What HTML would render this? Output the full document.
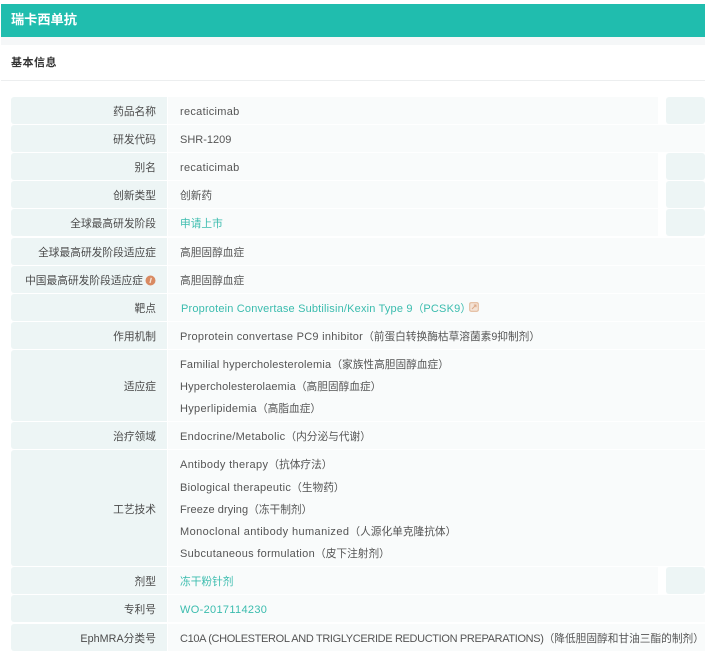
<!DOCTYPE html>
<html lang="zh-CN">
<head>
<meta charset="utf-8">
<title>瑞卡西单抗</title>
<style>
html,body{margin:0;padding:0;background:#fff}
body{width:709px;height:658px;position:relative;overflow:hidden;font-family:"Liberation Sans","Noto Sans CJK SC",sans-serif;font-size:11px;color:#555}
.a{position:absolute}
.hdr{left:1px;top:4px;width:704px;height:33px;background:#20bdae}
.band{left:1px;top:37px;width:704px;height:8px;background:#f5f7f8}
.line{left:1px;top:80px;width:704px;height:1px;background:#eceeef}
.l{left:11px;width:156px;background:#edf5f5;border-radius:3px 0 0 3px}
.v{left:168px;background:#f9fbfb}
.box{left:666px;width:39px;background:#edf5f5;border-radius:3px}
.t{height:16px;line-height:16px;white-space:nowrap;filter:blur(.35px)}
.lb{right:553px;text-align:right;color:#4a4a4a;font-size:10.72px}
.tx{left:180px;letter-spacing:.3px}
.c{font-size:10.7px;letter-spacing:0}
.g{color:#3bbcae}
</style>
</head>
<body>
<div class="a hdr"></div>
<div class="a band"></div>
<div class="a line"></div>
<div class="a t" style="left:11px;top:12px;color:#fff;font-size:13.2px;font-weight:bold">瑞卡西单抗</div>
<div class="a t" style="left:11px;top:55px;color:#333;font-size:11px;font-weight:bold;letter-spacing:.5px">基本信息</div>

<div class="a l" style="top:97px;height:27px"></div><div class="a v" style="top:97px;height:27px;width:490px"></div><div class="a box" style="top:97px;height:27px"></div>
<div class="a l" style="top:125px;height:27px"></div><div class="a v" style="top:125px;height:27px;width:537px"></div>
<div class="a l" style="top:153px;height:27px"></div><div class="a v" style="top:153px;height:27px;width:490px"></div><div class="a box" style="top:153px;height:27px"></div>
<div class="a l" style="top:181px;height:27px"></div><div class="a v" style="top:181px;height:27px;width:490px"></div><div class="a box" style="top:181px;height:27px"></div>
<div class="a l" style="top:209px;height:27px"></div><div class="a v" style="top:209px;height:27px;width:490px"></div><div class="a box" style="top:209px;height:27px"></div>
<div class="a l" style="top:238px;height:27px"></div><div class="a v" style="top:238px;height:27px;width:537px"></div>
<div class="a l" style="top:266px;height:27px"></div><div class="a v" style="top:266px;height:27px;width:537px"></div>
<div class="a l" style="top:294px;height:27px"></div><div class="a v" style="top:294px;height:27px;width:537px"></div>
<div class="a l" style="top:322px;height:27px"></div><div class="a v" style="top:322px;height:27px;width:537px"></div>
<div class="a l" style="top:350px;height:71px"></div><div class="a v" style="top:350px;height:71px;width:537px"></div>
<div class="a l" style="top:422px;height:27px"></div><div class="a v" style="top:422px;height:27px;width:537px"></div>
<div class="a l" style="top:450px;height:116px"></div><div class="a v" style="top:450px;height:116px;width:537px"></div>
<div class="a l" style="top:567px;height:27px"></div><div class="a v" style="top:567px;height:27px;width:490px"></div><div class="a box" style="top:567px;height:27px"></div>
<div class="a l" style="top:595px;height:27px"></div><div class="a v" style="top:595px;height:27px;width:537px"></div>
<div class="a l" style="top:624px;height:27px"></div><div class="a v" style="top:624px;height:27px;width:537px"></div>

<div class="a t lb" style="top:104px">药品名称</div>
<div class="a t lb" style="top:132px">研发代码</div>
<div class="a t lb" style="top:160px">别名</div>
<div class="a t lb" style="top:188px">创新类型</div>
<div class="a t lb" style="top:216px">全球最高研发阶段</div>
<div class="a t lb" style="top:245px">全球最高研发阶段适应症</div>
<div class="a t lb" style="top:273px;right:566px">中国最高研发阶段适应症</div>
<svg class="a" style="left:145px;top:275px" width="11" height="11" viewBox="0 0 11 11"><circle cx="5.5" cy="5.5" r="5" fill="#d98a62"/><path d="M6.3 2.8 5 8" stroke="#f6e3d6" stroke-width="1.3" fill="none"/></svg>
<div class="a t lb" style="top:301px">靶点</div>
<div class="a t lb" style="top:329px">作用机制</div>
<div class="a t lb" style="top:379px">适应症</div>
<div class="a t lb" style="top:429px">治疗领域</div>
<div class="a t lb" style="top:502px">工艺技术</div>
<div class="a t lb" style="top:574px">剂型</div>
<div class="a t lb" style="top:602px">专利号</div>
<div class="a t lb" style="top:631px;letter-spacing:.06px">EphMRA分类号</div>

<div class="a t tx" style="top:104px">recaticimab</div>
<div class="a t tx" style="top:132px;letter-spacing:0">SHR-1209</div>
<div class="a t tx" style="top:160px">recaticimab</div>
<div class="a t tx c" style="top:188px">创新药</div>
<div class="a t tx c g" style="top:216px">申请上市</div>
<div class="a t tx c" style="top:245px">高胆固醇血症</div>
<div class="a t tx c" style="top:273px">高胆固醇血症</div>
<div class="a t tx g" style="top:301px;left:181px;letter-spacing:.18px">Proprotein Convertase Subtilisin/Kexin Type 9<span class="c">（</span>PCSK9<span class="c">）</span></div>
<svg class="a" style="left:469px;top:302px" width="10" height="10" viewBox="0 0 10 10"><rect x=".7" y=".7" width="8.6" height="8.6" rx="1.5" fill="#f4e3d6" stroke="#e3bb9c" stroke-width="1.1"/><path d="M3 7 7 3M4.8 3H7v2.2" stroke="#dca988" fill="none"/></svg>
<div class="a t tx" style="top:329px;letter-spacing:.27px">Proprotein convertase PC9 inhibitor<span class="c">（前蛋白转换酶枯草溶菌素9抑制剂）</span></div>
<div class="a t tx" style="top:357px;letter-spacing:.2px">Familial hypercholesterolemia<span class="c">（家族性高胆固醇血症）</span></div>
<div class="a t tx" style="top:379px;letter-spacing:.16px">Hypercholesterolaemia<span class="c">（高胆固醇血症）</span></div>
<div class="a t tx" style="top:401px">Hyperlipidemia<span class="c">（高脂血症）</span></div>
<div class="a t tx" style="top:429px">Endocrine/Metabolic<span class="c">（内分泌与代谢）</span></div>
<div class="a t tx" style="top:457px;letter-spacing:.36px">Antibody therapy<span class="c">（抗体疗法）</span></div>
<div class="a t tx" style="top:480px">Biological therapeutic<span class="c">（生物药）</span></div>
<div class="a t tx" style="top:502px;letter-spacing:.07px">Freeze drying<span class="c">（冻干制剂）</span></div>
<div class="a t tx" style="top:524px;letter-spacing:.4px">Monoclonal antibody humanized<span class="c">（人源化单克隆抗体）</span></div>
<div class="a t tx" style="top:546px">Subcutaneous formulation<span class="c">（皮下注射剂）</span></div>
<div class="a t tx c g" style="top:574px">冻干粉针剂</div>
<div class="a t tx g" style="top:602px;letter-spacing:.33px">WO-2017114230</div>
<div class="a t tx" style="top:631px;letter-spacing:-.35px">C10A (CHOLESTEROL AND TRIGLYCERIDE REDUCTION PREPARATIONS)<span class="c">（降低胆固醇和甘油三酯的制剂）</span></div>
</body>
</html>
